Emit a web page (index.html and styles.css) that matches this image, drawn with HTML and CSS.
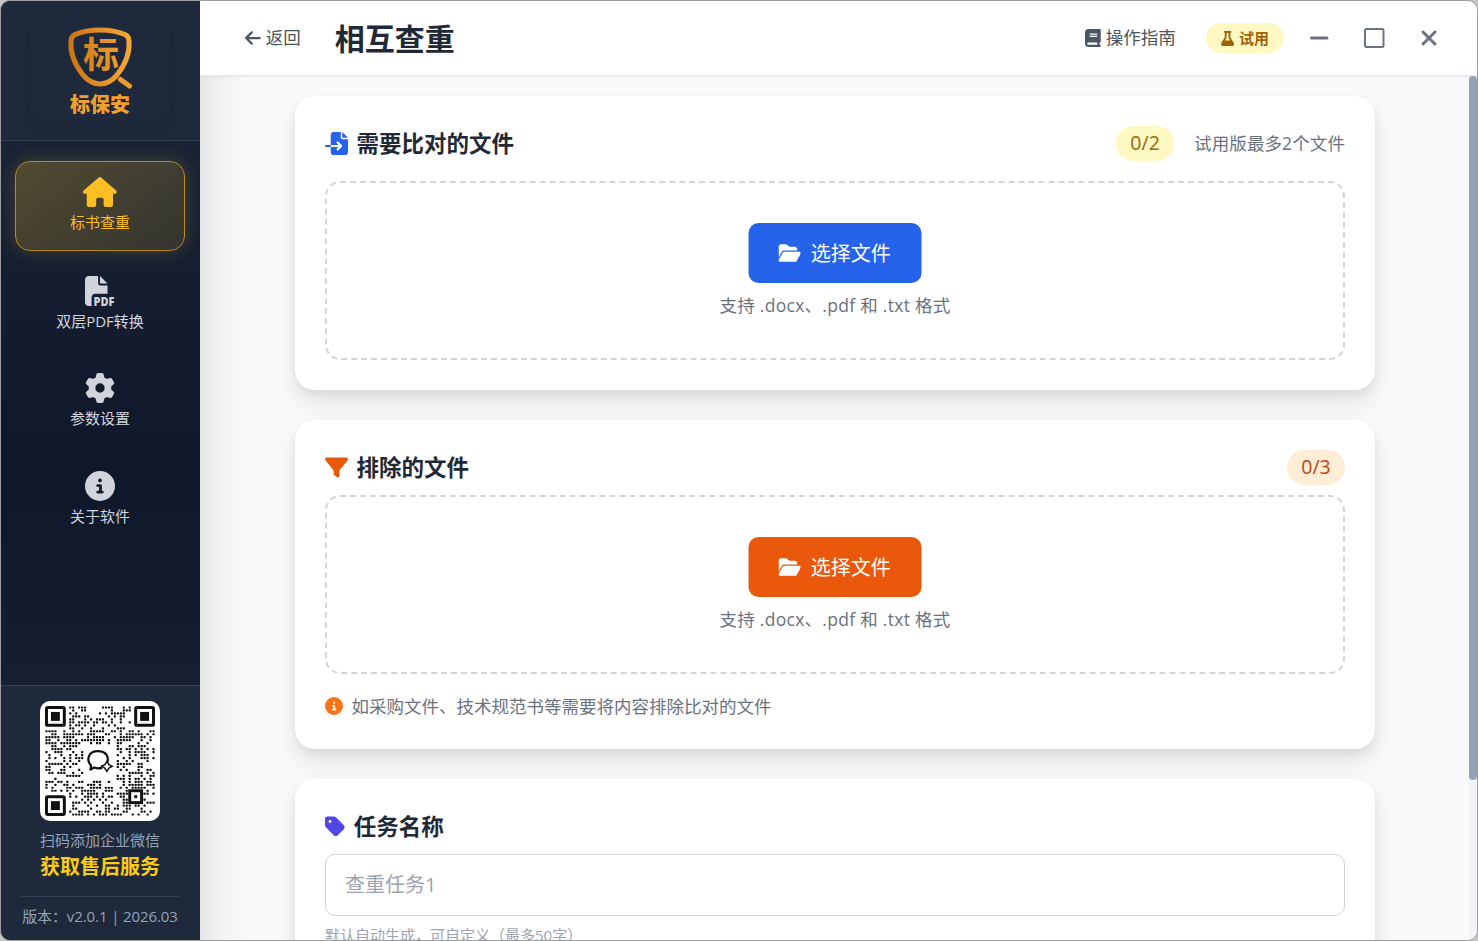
FILE: index.html
```html
<!DOCTYPE html>
<html lang="zh-CN">
<head>
    <meta charset="UTF-8">
    <meta name="viewport" content="width=device-width, initial-scale=1.0">
    <title>标保安 - 相互查重</title>
    <link rel="stylesheet" href="styles.css">
</head>
<body>

<div class="window">
    <aside class="sidebar">
        <div class="brand">
            <div class="brand-box">
                <svg class="brand-logo" viewBox="0 0 140 100">
                    <defs>
                        <linearGradient id="gold" gradientUnits="userSpaceOnUse" x1="38" y1="0" x2="102" y2="0">
                            <stop offset="0" stop-color="#cb7413"/>
                            <stop offset="1" stop-color="#f5a93a"/>
                        </linearGradient>
                    </defs>
                    <path class="shield" d="M70 10C61 10 52 11.500 45 14.500C42 16 41 18 41 21C40 33 45 45 53 55C59 62 64 64 70 64C76 64 81 62 87 55C95 45 100 33 99 21C99 18 98 16 95 14.500C88 11.500 79 10 70 10Z"/>
                    <path class="handle" d="M90.500 59.500L99.500 66"/>
                    <text class="shield-char" x="71" y="48">标</text>
                    <text class="brand-name" x="70" y="91.500">标保安</text>
                </svg>
            </div>
        </div>

        <nav class="nav">
            <a class="nav-item active">
                <svg class="icon" viewBox="0 0 576 512"><path d="M575.8 255.5c0 18-15 32.1-32 32.1h-32l.7 160.2c0 2.700-.2 5.400-.5 8.100V472c0 22.100-17.900 40-40 40H392c-22.100 0-40-17.900-40-40V384c0-17.700-14.300-32-32-32H256c-17.700 0-32 14.300-32 32v88c0 22.100-17.900 40-40 40H104c-22.100 0-40-17.900-40-40V287.600H32c-18 0-32-14-32-32.100c0-9 3-17 10-24L266.400 8c7-7 15-8 22-8s15 2 21 7L564.800 231.500c8 7 12 15 11 24z"/></svg>
                <span>标书查重</span>
            </a>
            <a class="nav-item">
                <svg class="icon pdf-icon" viewBox="0 0 512 512"><path d="M0 64C0 28.700 28.700 0 64 0H224V128c0 17.700 14.300 32 32 32H384V304H176c-35.300 0-64 28.700-64 64V512H64c-35.300 0-64-28.700-64-64V64zm384 64H256V0L384 128z"/><text class="pdf-text" x="146" y="508" textLength="354" lengthAdjust="spacingAndGlyphs">PDF</text></svg>
                <span>双层PDF转换</span>
            </a>
            <a class="nav-item">
                <svg class="icon" viewBox="0 0 512 512"><path d="M495.900 166.600c3.200 8.700 .5 18.400-6.400 24.600l-43.300 39.400c1.100 8.300 1.700 16.800 1.700 25.400s-.6 17.100-1.700 25.400l43.300 39.400c6.900 6.200 9.600 15.900 6.400 24.600c-4.400 11.900-9.700 23.300-15.800 34.300l-4.700 8.100c-6.600 11-14 21.400-22.100 31.200c-5.900 7.200-15.700 9.600-24.500 6.800l-55.700-17.700c-13.400 10.300-28.200 18.900-44 25.400l-12.500 57.100c-2 9.100-9 16.300-18.200 17.800c-13.800 2.300-28 3.500-42.500 3.500s-28.700-1.200-42.500-3.500c-9.200-1.500-16.200-8.700-18.200-17.800l-12.500-57.100c-15.800-6.500-30.600-15.100-44-25.400L83.100 425.900c-8.800 2.800-18.600 .3-24.500-6.800c-8.100-9.800-15.500-20.200-22.100-31.200l-4.700-8.100c-6.100-11-11.400-22.400-15.800-34.300c-3.200-8.700-.5-18.400 6.400-24.600l43.300-39.400C64.600 273.100 64 264.600 64 256s.6-17.100 1.700-25.400L22.400 191.200c-6.900-6.200-9.600-15.900-6.400-24.600c4.400-11.900 9.700-23.300 15.800-34.300l4.700-8.100c6.600-11 14-21.400 22.100-31.200c5.900-7.200 15.700-9.600 24.500-6.800l55.700 17.700c13.400-10.300 28.200-18.900 44-25.400l12.500-57.100c2-9.100 9-16.300 18.200-17.800C227.300 1.200 241.500 0 256 0s28.700 1.200 42.500 3.500c9.200 1.500 16.200 8.700 18.200 17.800l12.500 57.100c15.800 6.500 30.600 15.100 44 25.400l55.700-17.700c8.800-2.800 18.600-.3 24.500 6.800c8.100 9.800 15.500 20.200 22.100 31.200l4.700 8.100c6.100 11 11.400 22.400 15.800 34.300zM256 336a80 80 0 1 0 0-160 80 80 0 1 0 0 160z"/></svg>
                <span>参数设置</span>
            </a>
            <a class="nav-item">
                <svg class="icon" viewBox="0 0 512 512"><path d="M256 512A256 256 0 1 0 256 0a256 256 0 1 0 0 512zM216 336h24V272H216c-13.300 0-24-10.700-24-24s10.700-24 24-24h48c13.300 0 24 10.700 24 24v88h8c13.300 0 24 10.700 24 24s-10.700 24-24 24H216c-13.300 0-24-10.700-24-24s10.700-24 24-24zm40-208a32 32 0 1 1 0 64 32 32 0 1 1 0-64z"/></svg>
                <span>关于软件</span>
            </a>
        </nav>

        <div class="service">
            <div class="qr-box">
                <svg id="qr" class="qr" viewBox="0 0 37 37"></svg>
            </div>
            <div class="service-text">扫码添加企业微信</div>
            <div class="service-title">获取售后服务</div>
            <div class="version">版本：v2.0.1 | 2026.03</div>
        </div>
    </aside>

    <div class="main">
        <header class="topbar">
            <a class="back-btn">
                <svg class="icon" viewBox="0 0 448 512"><path d="M9.400 233.400c-12.500 12.500-12.500 32.800 0 45.300l160 160c12.500 12.500 32.800 12.500 45.300 0s12.500-32.800 0-45.300L109.200 288 416 288c17.700 0 32-14.300 32-32s-14.300-32-32-32l-306.700 0L214.600 118.600c12.500-12.500 12.500-32.800 0-45.300s-32.800-12.500-45.300 0l-160 160z"/></svg>
                <span>返回</span>
            </a>
            <h1>相互查重</h1>
            <a class="guide">
                <svg class="icon" viewBox="0 0 448 512"><path d="M96 0C43 0 0 43 0 96V416c0 53 43 96 96 96H384h32c17.700 0 32-14.300 32-32s-14.300-32-32-32V384c17.700 0 32-14.300 32-32V32c0-17.700-14.300-32-32-32H384 96zm0 384H352v64H96c-17.700 0-32-14.300-32-32s14.300-32 32-32zm32-240c0-8.800 7.200-16 16-16H336c8.800 0 16 7.200 16 16s-7.200 16-16 16H144c-8.800 0-16-7.200-16-16zm16 48H336c8.800 0 16 7.200 16 16s-7.200 16-16 16H144c-8.800 0-16-7.200-16-16s7.200-16 16-16z"/></svg>
                <span>操作指南</span>
            </a>
            <span class="trial">
                <svg class="icon" viewBox="0 0 448 512"><path d="M288 0H160 128C110.300 0 96 14.300 96 32s14.300 32 32 32V196.800c0 11.800-3.300 23.500-9.500 33.500L10.300 406.200C3.600 417.200 0 429.700 0 442.600C0 480.900 31.100 512 69.400 512H378.600c38.300 0 69.400-31.100 69.400-69.400c0-12.800-3.600-25.400-10.300-36.400L329.500 230.400c-6.200-10.100-9.500-21.700-9.500-33.500V64c17.700 0 32-14.300 32-32s-14.300-32-32-32H288zM192 196.800V64h64V196.800c0 23.700 6.600 46.900 19 67.100L309.500 320h-171L173 263.900c12.400-20.200 19-43.400 19-67.100z"/></svg>
                <span>试用</span>
            </span>
            <div class="win-btns">
                <button class="win-btn"><svg viewBox="0 0 24 24"><path d="M4.500 12H20"/></svg></button>
                <button class="win-btn"><svg viewBox="0 0 24 24"><rect class="thin" x="3" y="3" width="18.500" height="18" rx="1.500"/></svg></button>
                <button class="win-btn"><svg viewBox="0 0 24 24"><path d="M6 6L18 18M18 6L6 18"/></svg></button>
            </div>
        </header>

        <div class="body">
            <div class="content">
                <section class="card">
                    <div class="card-head">
                        <svg class="icon blue" viewBox="0 0 512 512"><path d="M128 64c0-35.300 28.700-64 64-64H352V128c0 17.700 14.300 32 32 32H512V448c0 35.300-28.700 64-64 64H192c-35.300 0-64-28.700-64-64V336H302.100l-39 39c-9.400 9.400-9.400 24.600 0 33.900s24.600 9.400 33.900 0l80-80c9.400-9.400 9.400-24.600 0-33.900l-80-80c-9.400-9.400-24.600-9.400-33.900 0s-9.400 24.600 0 33.900l39 39H128V64zm0 224v48H24c-13.300 0-24-10.700-24-24s10.700-24 24-24H128zM512 128H384V0L512 128z"/></svg>
                        <h2>需要比对的文件</h2>
                        <span class="count yellow">0/2</span>
                        <span class="limit">试用版最多2个文件</span>
                    </div>
                    <div class="drop">
                        <button class="pick-btn">
                            <svg class="icon" viewBox="0 0 576 512"><path d="M88.700 223.800L0 375.800V96C0 60.700 28.700 32 64 32H181.500c17 0 33.300 6.700 45.300 18.700l26.500 26.500c12 12 28.300 18.700 45.300 18.700H416c35.300 0 64 28.700 64 64v32H144c-22.800 0-43.800 12.100-55.300 31.800zm27.600 16.100C122.100 230 132.600 224 144 224H544c11.500 0 22 6.100 27.700 16.100s5.700 22.200-.1 32.100l-112 192C453.900 474 443.400 480 432 480H32c-11.500 0-22-6.100-27.700-16.100s-5.700-22.200 .1-32.100l112-192z"/></svg>
                            <span>选择文件</span>
                        </button>
                        <p>支持 .docx、.pdf 和 .txt 格式</p>
                    </div>
                </section>

                <section class="card">
                    <div class="card-head tight">
                        <svg class="icon orange" viewBox="0 0 512 512"><path d="M3.900 54.900C10.500 40.900 24.500 32 40 32H472c15.500 0 29.500 8.900 36.100 22.900s4.600 30.500-5.200 42.500L320 320.900V448c0 12.100-6.800 23.200-17.700 28.600s-23.800 4.300-33.500-3l-64-48c-8.100-6-12.800-15.500-12.800-25.600V320.900L9 97.300C-.7 85.400-2.800 68.800 3.900 54.900z"/></svg>
                        <h2>排除的文件</h2>
                        <span class="count peach">0/3</span>
                    </div>
                    <div class="drop">
                        <button class="pick-btn pick-orange">
                            <svg class="icon" viewBox="0 0 576 512"><path d="M88.700 223.800L0 375.800V96C0 60.700 28.700 32 64 32H181.500c17 0 33.300 6.700 45.300 18.700l26.500 26.500c12 12 28.300 18.700 45.300 18.700H416c35.300 0 64 28.700 64 64v32H144c-22.800 0-43.800 12.100-55.300 31.800zm27.600 16.100C122.100 230 132.600 224 144 224H544c11.500 0 22 6.100 27.700 16.100s5.700 22.200-.1 32.100l-112 192C453.900 474 443.400 480 432 480H32c-11.500 0-22-6.100-27.700-16.100s-5.700-22.200 .1-32.100l112-192z"/></svg>
                            <span>选择文件</span>
                        </button>
                        <p>支持 .docx、.pdf 和 .txt 格式</p>
                    </div>
                    <div class="note">
                        <svg class="icon" viewBox="0 0 512 512"><path d="M256 512A256 256 0 1 0 256 0a256 256 0 1 0 0 512zM216 336h24V272H216c-13.300 0-24-10.700-24-24s10.700-24 24-24h48c13.300 0 24 10.700 24 24v88h8c13.300 0 24 10.700 24 24s-10.700 24-24 24H216c-13.300 0-24-10.700-24-24s10.700-24 24-24zm40-208a32 32 0 1 1 0 64 32 32 0 1 1 0-64z"/></svg>
                        <span>如采购文件、技术规范书等需要将内容排除比对的文件</span>
                    </div>
                </section>

                <section class="card">
                    <div class="card-head tight">
                        <svg class="icon indigo" viewBox="0 0 448 512"><path d="M0 80V229.500c0 17 6.700 33.300 18.700 45.300l176 176c25 25 65.500 25 90.500 0L418.700 317.300c25-25 25-65.500 0-90.500l-176-176c-12-12-28.300-18.700-45.300-18.700H48C21.500 32 0 53.500 0 80zm112 32a32 32 0 1 1 0 64 32 32 0 1 1 0-64z"/></svg>
                        <h2>任务名称</h2>
                    </div>
                    <input class="task-input" type="text" placeholder="查重任务1">
                    <div class="hint">默认自动生成，可自定义（最多50字）</div>
                </section>
            </div>
            <div class="scrollbar"><div class="thumb"></div></div>
        </div>
    </div>
</div>

<script src="qr.js"></script>
</body>
</html>
```

FILE: styles.css
```css
* {
    box-sizing: border-box;
}
body {
    margin: 0;
    height: 941px;
    overflow: hidden;
    background: #c4c6c4;
    font-family: "Open Sans", "Noto Sans CJK SC", sans-serif;
    color: #1f2937;
}
h1, h2, p {
    margin: 0;
}
button {
    font-family: inherit;
    border: none;
    cursor: pointer;
}
.icon {
    fill: currentColor;
    flex-shrink: 0;
}
.window {
    height: 941px;
    display: flex;
    border: 1px solid #9c9e9d;
    border-radius: 10px;
    overflow: hidden;
}

/* sidebar */
.sidebar {
    width: 199px;
    flex-shrink: 0;
    display: flex;
    flex-direction: column;
    background: linear-gradient(180deg, #1e293b 0%, #0f172a 50%, #1e293b 100%);
}
.brand {
    height: 140px;
    padding: 19px 30px 20px 29px;
    background: #1e293b;
    border-bottom: 1px solid #334155;
}
.brand-box {
    height: 100px;
    border-radius: 15px;
    box-shadow: 0 8px 12px -2px rgba(15, 23, 42, 0.18);
}
.brand-logo {
    display: block;
    width: 140px;
    height: 100px;
}
.shield {
    fill: none;
    stroke: url(#gold);
    stroke-width: 5;
}
.handle {
    stroke: #eb9c2e;
    stroke-width: 5;
    stroke-linecap: round;
}
.shield-char {
    fill: url(#gold);
    font-size: 36px;
    font-weight: 700;
    text-anchor: middle;
}
.brand-name {
    fill: #f0a030;
    font-size: 20px;
    font-weight: 900;
    text-anchor: middle;
}
.nav {
    flex: 1;
    display: flex;
    flex-direction: column;
    gap: 7.5px;
    padding: 21px 15px 0 14px;
}
.nav-item {
    height: 90px;
    padding-top: 16px;
    display: flex;
    flex-direction: column;
    align-items: center;
    gap: 4px;
    border-radius: 15px;
    color: #d1d5db;
    font-size: 15px;
    line-height: 22px;
}
.nav-item .icon {
    height: 30px;
}
.nav-item.active {
    padding-top: 15px;
    transform: translateY(-1px);
    color: #fbbf24;
    border: 1px solid #b58a24;
    background: linear-gradient(135deg, rgba(251, 191, 36, 0.25), rgba(251, 191, 36, 0.13));
    box-shadow: 0 0 18px rgba(251, 191, 36, 0.22);
}
.pdf-icon {
    overflow: visible;
}
.pdf-text {
    font-family: "Open Sans", sans-serif;
    font-size: 215px;
    font-weight: 800;
}
.service {
    height: 255px;
    padding: 15px 20px 0 19px;
    background: #1e293b;
    border-top: 1px solid #334155;
    text-align: center;
    color: #94a3b8;
    font-size: 15px;
}
.qr-box {
    width: 120px;
    height: 120px;
    margin: 0 auto;
    padding: 5px;
    background: white;
    border-radius: 10px;
}
.qr {
    display: block;
    width: 110px;
    height: 110px;
}
.service-text {
    margin-top: 7px;
    line-height: 24px;
}
.service-title {
    margin-top: 1px;
    color: #facc15;
    font-size: 20px;
    font-weight: 700;
    line-height: 28px;
}
.version {
    margin-top: 15px;
    padding-top: 7px;
    border-top: 1px solid #334155;
    line-height: 24px;
    letter-spacing: -0.1px;
    white-space: nowrap;
}

/* top bar */
.main {
    flex: 1;
    min-width: 0;
    display: flex;
    flex-direction: column;
}
.topbar {
    position: relative;
    height: 75px;
    display: flex;
    align-items: center;
    padding: 0 28px 1px 45px;
    background: white;
    border-bottom: 1px solid #e5e7eb;
    box-shadow: 0 1px 3px rgba(0, 0, 0, 0.06);
    color: #4b5563;
    font-size: 17.5px;
}
.back-btn, .guide {
    display: flex;
    align-items: center;
    gap: 5px;
}
.back-btn span, .guide span {
    margin-top: -2px;
}
.topbar .icon {
    height: 18px;
}
.topbar h1 {
    margin-left: 34px;
    margin-right: auto;
    padding-top: 2px;
    color: #1f2937;
    font-size: 30px;
    line-height: 40px;
}
.trial {
    height: 30px;
    margin-top: 1px;
    margin-left: 30px;
    padding: 0 15px;
    display: flex;
    align-items: center;
    gap: 5px;
    border-radius: 15px;
    background: #fef9c3;
    color: #a16207;
    font-size: 15px;
    font-weight: 700;
}
.trial span {
    margin-top: -2px;
}
.topbar .trial .icon {
    height: 15px;
}
.win-btns {
    display: flex;
    gap: 15px;
    margin-left: 15px;
}
.win-btn {
    width: 40px;
    height: 40px;
    padding: 8px;
    background: none;
}
.win-btn svg {
    display: block;
    width: 24px;
    height: 24px;
    fill: none;
    stroke: #6b7280;
    stroke-width: 3;
    stroke-linecap: round;
}
.win-btn .thin {
    stroke-width: 2;
}

/* content */
.body {
    flex: 1;
    min-height: 0;
    display: flex;
}
.content {
    flex: 1;
    padding: 20px 0 0 95px;
    overflow: hidden;
    background: linear-gradient(90deg, rgba(0, 0, 0, 0.08), rgba(0, 0, 0, 0.03) 22px, rgba(0, 0, 0, 0) 50px), #f8fafc;
}
.card {
    width: 1080px;
    margin-bottom: 30px;
    padding: 30px;
    background: white;
    border-radius: 20px;
    box-shadow: 0 12px 25px rgba(0, 0, 0, 0.1), 0 4px 8px rgba(0, 0, 0, 0.06);
}
.card-head {
    height: 35px;
    display: flex;
    align-items: center;
    margin-bottom: 20px;
}
.card-head.tight {
    margin-bottom: 10px;
}
.card-head .icon {
    height: 23px;
    margin-left: -0.5px;
    margin-right: 9px;
}
.card-head h2 {
    padding-top: 1px;
    font-size: 22.5px;
    line-height: 34px;
    margin-right: auto;
}
.blue {
    color: #2563eb;
}
.orange {
    color: #ea580c;
}
.indigo {
    color: #4f46e5;
}
.count {
    width: 58px;
    height: 35px;
    border-radius: 18px;
    font-size: 19.5px;
    line-height: 34px;
    text-align: center;
}
.yellow {
    background: #fef9c3;
    color: #a16207;
}
.peach {
    background: #ffedd5;
    color: #c2410c;
}
.limit {
    margin-top: -2px;
    margin-left: 20px;
    color: #6b7280;
    font-size: 17.5px;
    letter-spacing: 0.1px;
}
.drop {
    height: 179px;
    padding-top: 40px;
    border: 2px dashed #d1d5db;
    border-radius: 15px;
    text-align: center;
}
.drop p {
    margin-top: 10px;
    color: #6b7280;
    font-size: 17.5px;
    line-height: 25px;
    letter-spacing: 0.28px;
}
.pick-btn {
    width: 173px;
    height: 60px;
    margin: 0 auto;
    transform: translateX(-0.5px);
    display: flex;
    align-items: center;
    justify-content: center;
    gap: 10px;
    border-radius: 10px;
    background: #2563eb;
    color: white;
    font-size: 20px;
}
.pick-btn span {
    margin-top: -2px;
}
.pick-btn .icon {
    height: 20px;
}
.pick-orange {
    background: #ea580c;
}
.note {
    height: 25px;
    margin-top: 20px;
    padding-bottom: 1px;
    display: flex;
    align-items: center;
    gap: 9px;
    color: #6b7280;
    font-size: 17.5px;
}
.note span {
    margin-top: -1px;
}
.note .icon {
    height: 18px;
    margin-left: -0.5px;
    color: #f97316;
}
.task-input {
    display: block;
    width: 100%;
    height: 62px;
    padding: 0 19px 2px;
    border: 1px solid #d1d5db;
    border-radius: 10px;
    background: white;
    font-family: inherit;
    font-size: 20px;
}
.task-input::placeholder {
    color: #9ca3af;
}
.hint {
    margin-top: 7px;
    color: #9ca3af;
    font-size: 15px;
    line-height: 24px;
}
.scrollbar {
    width: 8px;
    background: #f1f5f9;
}
.thumb {
    height: 704px;
    border-radius: 4px;
    background: #94a3b8;
}

/* qr code parts */
.qr-ring {
    fill: none;
    stroke: #111;
}
.qr-dot {
    fill: #111;
}
.qr-mark {
    fill: none;
    stroke: #111;
    stroke-width: 0.75;
    stroke-linejoin: round;
}
.qr-star {
    fill: white;
    stroke: #111;
    stroke-width: 0.5;
}
```

FILE: qr.js
```javascript
const SIZE = 37;
let seed = 20263;

function rand() {
    seed = (seed * 1103515245 + 12345) % 2147483648;
    return seed / 2147483648;
}

// finders, alignment square and the logo in the middle stay free of dots
function reserved(x, y) {
    if (x < 8 && y < 8) return true;
    if (x > 28 && y < 8) return true;
    if (x < 8 && y > 28) return true;
    if (x > 27 && x < 33 && y > 27 && y < 33) return true;
    return x > 12 && x < 24 && y > 12 && y < 25;
}

function finder(x, y) {
    return `<rect class="qr-ring" x="${x + 0.5}" y="${y + 0.5}" width="6" height="6" rx="0.4"/>
            <rect class="qr-dot" x="${x + 2}" y="${y + 2}" width="3" height="3"/>`;
}

let parts = finder(0, 0) + finder(30, 0) + finder(0, 30);
parts += '<rect class="qr-ring" x="28.5" y="28.5" width="4" height="4"/><rect class="qr-dot" x="30" y="30" width="1" height="1"/>';

for (let y = 0; y < SIZE; y++) {
    for (let x = 0; x < SIZE; x++) {
        if (!reserved(x, y) && rand() < 0.48) {
            parts += `<rect class="qr-dot" x="${x + 0.13}" y="${y + 0.13}" width="0.74" height="0.74" rx="0.2"/>`;
        }
    }
}

parts += '<path class="qr-mark" d="M19.2 20.800C18.200 21.100 17.300 21 16.500 20.700L15.300 21.400L15.500 20C13.800 18.200 14.500 15.200 17.800 15.200C20.500 15.200 21.500 17 21 18.800"/>';
parts += '<path class="qr-star" d="M20.800 18.700L21.500 19.700L22.600 20.300L21.500 20.900L20.800 22L20.100 20.900L19 20.300L20.100 19.700Z"/>';

document.getElementById("qr").innerHTML = parts;
```
